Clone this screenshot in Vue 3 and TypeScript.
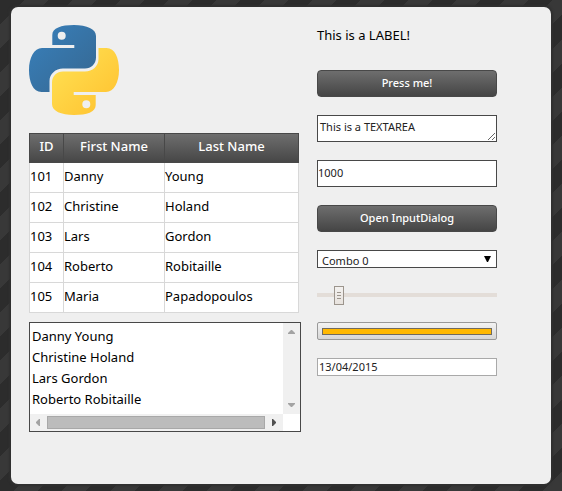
<script setup lang="ts">
import { ref } from 'vue'

interface Person {
  id: number
  first: string
  last: string
}

const people: Person[] = [
  { id: 101, first: 'Danny', last: 'Young' },
  { id: 102, first: 'Christine', last: 'Holand' },
  { id: 103, first: 'Lars', last: 'Gordon' },
  { id: 104, first: 'Roberto', last: 'Robitaille' },
  { id: 105, first: 'Maria', last: 'Papadopoulos' },
]

const selected = ref<string[]>([])
const notes = ref('This is a TEXTAREA')
const amount = ref('1000')
const combo = ref('Combo 0')
const level = ref(10)
const date = ref('13/04/2015')
</script>

<template>
  <main class="panel">
    <section class="left">
      <svg class="logo" viewBox="0 0 90 90" role="img" aria-label="Python">
        <defs>
          <linearGradient id="blue" x1="0" y1="0" x2="1" y2="1">
            <stop offset="0.1" stop-color="#387eb8" />
            <stop offset="0.9" stop-color="#366994" />
          </linearGradient>
          <linearGradient id="yellow" x1="0" y1="0" x2="1" y2="1">
            <stop offset="0.1" stop-color="#ffe052" />
            <stop offset="0.9" stop-color="#ffc331" />
          </linearGradient>
        </defs>
        <path
          fill="url(#blue)"
          fill-rule="evenodd"
          d="M23.3 20V10C23.3 3 32 0 45 0S67 4 67 11V32.500C67 39 62 43.500 56 43.500H34C26.500 43.500 20.500 49 20.500 56V67H12.500C4 67 0 57 0 45S5 23 13 23H45.300V20ZM32.700 6.700a4 4 0 1 0 0 8a4 4 0 1 0 0-8Z"
        />
        <path
          fill="url(#yellow)"
          fill-rule="evenodd"
          d="M66.700 70V80C66.700 87 58 90 45 90S23 86 23 79V57.500C23 51 28 46.500 34 46.500H56C63.500 46.500 69.500 41 69.500 34V23H77.500C86 23 90 33 90 45S85 67 77 67H44.700V70ZM57.300 83.300a4 4 0 1 0 0-8a4 4 0 1 0 0 8Z"
        />
      </svg>

      <table class="people">
        <colgroup>
          <col class="col-id" />
          <col class="col-first" />
          <col />
        </colgroup>
        <thead>
          <tr>
            <th scope="col">ID</th>
            <th scope="col">First Name</th>
            <th scope="col">Last Name</th>
          </tr>
        </thead>
        <tbody>
          <tr v-for="p in people" :key="p.id">
            <td>{{ p.id }}</td>
            <td>{{ p.first }}</td>
            <td>{{ p.last }}</td>
          </tr>
        </tbody>
      </table>

      <div class="listbox">
        <select v-model="selected" class="list" multiple size="4" aria-label="People">
          <option v-for="p in people.slice(0, 4)" :key="p.id">{{ p.first }} {{ p.last }}</option>
        </select>
        <div class="vbar" aria-hidden="true">
          <svg width="7" height="4" viewBox="0 0 7 4"><path d="M3 0h1l3 3v1H0V3Z" fill="#a3a3a3" /></svg>
          <svg width="7" height="4" viewBox="0 0 7 4"><path d="M0 0h7v1L4 4H3L0 1Z" fill="#a3a3a3" /></svg>
        </div>
        <div class="hbar" aria-hidden="true">
          <svg width="4" height="7" viewBox="0 0 4 7"><path d="M4 0v7H3L0 4V3L3 0Z" fill="#a3a3a3" /></svg>
          <span class="grip"></span>
          <svg width="4" height="7" viewBox="0 0 4 7"><path d="M0 0h1l3 3v1L1 7H0Z" fill="#505050" /></svg>
        </div>
      </div>
    </section>

    <section class="right">
      <p class="label">This is a LABEL!</p>
      <button type="button" class="btn">Press me!</button>
      <textarea v-model="notes" class="field area" aria-label="Text area"></textarea>
      <input v-model="amount" class="field number" type="text" aria-label="Amount" />
      <button type="button" class="btn">Open InputDialog</button>
      <div class="combo">
        <select v-model="combo" aria-label="Combo">
          <option>Combo 0</option>
        </select>
        <svg width="7" height="6" viewBox="0 0 7 6" aria-hidden="true"><path d="M0 0h7L4 6H3Z" /></svg>
      </div>
      <input v-model="level" class="slider" type="range" min="0" max="100" aria-label="Level" />
      <progress class="progress" value="100" max="100" aria-label="Progress"></progress>
      <input v-model="date" class="field date" type="text" aria-label="Date" />
    </section>
  </main>
</template>

<style>
body {
  margin: 0;
  min-height: 100vh;
  background: repeating-linear-gradient(135deg, #2c2c2c 0 17px, #383838 17px 34px);
}

#app {
  display: flow-root;
}
</style>

<style scoped>
.panel {
  display: grid;
  grid-template-columns: minmax(0, 272fr) minmax(0, 180fr);
  align-items: start;
  column-gap: 16px;
  margin: 7px 11px;
  padding: 18px 54px 52px 18px;
  border-radius: 7px;
  background: #efefef;
  box-shadow: 0 0 2px 2px #303030;
  color: #000;
  font: 13px/20px "Noto Sans", sans-serif;
}

.left {
  display: flex;
  flex-direction: column;
}

.logo {
  width: 90px;
  height: 90px;
}

.people {
  width: calc(100% - 2px);
  margin-top: 18px;
  border-collapse: collapse;
  table-layout: fixed;
  background: #fff;
}

.col-id {
  width: 34px;
}

.col-first {
  width: 101px;
}

th,
td {
  box-sizing: border-box;
  height: 30px;
  border: 1px solid #d8d8d8;
  padding: 0 0 4px;
  text-align: left;
  white-space: nowrap;
}

thead tr {
  background: linear-gradient(#6e6e6e, #454545);
}

th {
  height: 29px;
  border-color: #484848;
  color: #fff;
  font-weight: 500;
  text-align: center;
}

.listbox {
  display: grid;
  grid-template-columns: 1fr 17px;
  grid-template-rows: 91px 17px;
  margin-top: 9px;
  border: 1px solid #484848;
  background: #fff;
}

.list {
  min-width: 0;
  overflow: hidden;
  border: 0;
  padding: 4px 0 2px;
  outline: 0;
  background: #fff;
  color: inherit;
  font: inherit;
}

.list option {
  min-height: 21px;
  padding: 0 2px;
  line-height: 21px;
}

.vbar,
.hbar {
  display: flex;
  align-items: center;
  justify-content: space-between;
  background: #f0f0f0;
}

.vbar {
  flex-direction: column;
  padding: 7px 0;
}

.hbar {
  gap: 7px;
  padding: 0 7px 0 6px;
}

.grip {
  box-sizing: border-box;
  flex: 1;
  height: 13px;
  border: 1px solid #a8a8a8;
  background: #bcbcbc;
}

.right {
  display: flex;
  flex-direction: column;
  gap: 18px;
}

.right > * {
  box-sizing: border-box;
  width: 100%;
  margin: 0;
}

.label {
  height: 27px;
}

.btn {
  height: 27px;
  border: 1px solid #484848;
  border-radius: 4px;
  padding: 0 0 1px;
  background: linear-gradient(#6e6e6e, #454545);
  color: #fff;
  font: 500 11px/16px "Noto Sans", sans-serif;
}

.field {
  border: 1px solid #484848;
  border-radius: 0;
  outline: 0;
  background: #fff;
  color: #222;
  font: 11px/16px "Noto Sans", sans-serif;
}

.area {
  height: 27px;
  padding: 3px 2px;
  overflow: hidden;
  resize: both;
}

.number {
  height: 27px;
  padding: 0 0 2px;
}

.date {
  height: 18px;
  border-color: #a9a9a9;
  padding: 0 1px 2px;
}

.combo {
  display: grid;
  height: 18px;
  border: 1px solid #484848;
  background: #fff;
}

.combo select {
  grid-area: 1 / 1;
  min-width: 0;
  height: 16px;
  appearance: none;
  border: 0;
  padding: 2px 4px 0;
  outline: 0;
  background: transparent;
  color: #222;
  font: 11px/16px "Noto Sans", sans-serif;
}

.combo svg {
  grid-area: 1 / 1;
  justify-self: end;
  margin: 5px 5px;
  pointer-events: none;
}

.slider {
  height: 18px;
  appearance: none;
  background: linear-gradient(#e3ddd8, #e3ddd8) center / 100% 4px no-repeat;
}

.slider::-webkit-slider-thumb {
  box-sizing: border-box;
  width: 10px;
  height: 19px;
  appearance: none;
  border: 1px solid #9c958d;
  background:
    linear-gradient(#9c958d, #9c958d) 2px 5px / 4px 1px no-repeat,
    linear-gradient(#9c958d, #9c958d) 2px 8px / 4px 1px no-repeat,
    linear-gradient(#9c958d, #9c958d) 2px 11px / 4px 1px no-repeat,
    linear-gradient(#f3f1ef, #e8e3de);
}

.progress {
  height: 18px;
  appearance: none;
  border: 1px solid #999;
  border-radius: 2px;
  padding: 5px 4px 4px;
  background: linear-gradient(#f3f3f3, #d6d6d6);
}

.progress::-webkit-progress-bar {
  background: transparent;
}

.progress::-webkit-progress-value {
  box-sizing: border-box;
  border: 1px solid #6f6a60;
  background: #ffb800;
}
</style>
